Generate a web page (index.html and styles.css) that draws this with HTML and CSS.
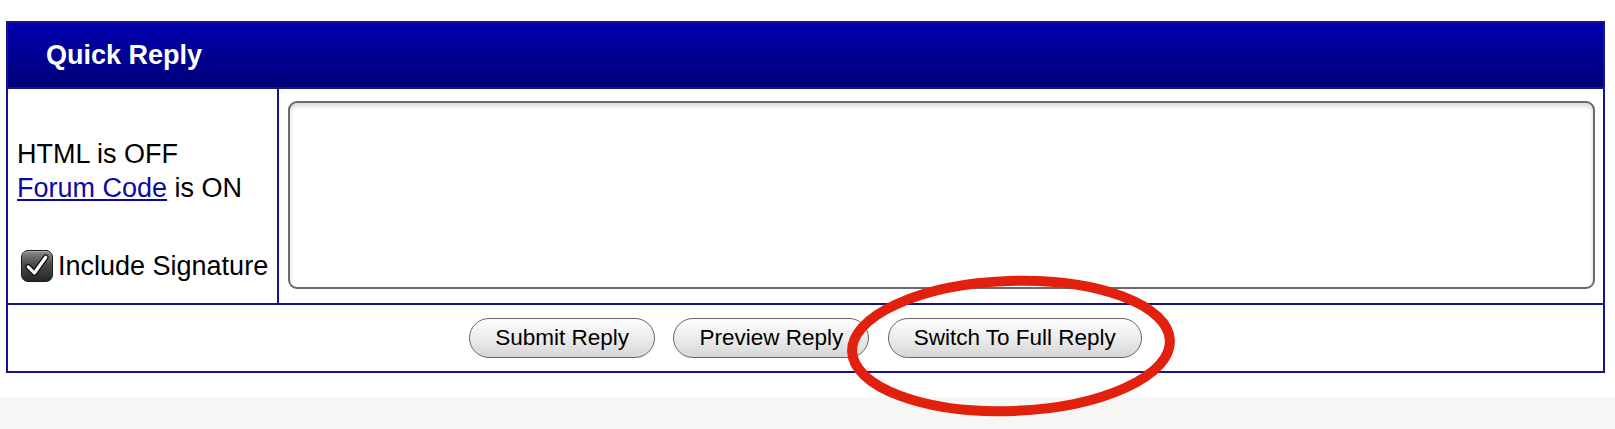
FILE: index.html
```html
<!DOCTYPE html>
<html lang="en">
<head>
    <meta charset="UTF-8">
    <meta name="viewport" content="width=device-width, initial-scale=1.0">
    <title>Quick Reply</title>
    <link rel="stylesheet" href="styles.css">
</head>
<body>
    <div class="page">
        <table class="quick-reply">
            <tr>
                <th colspan="2">Quick Reply</th>
            </tr>
            <tr>
                <td class="options">
                    HTML is OFF<br>
                    <a href="#">Forum Code</a> is ON<br>
                    <br>
                    <label class="sig">
                        <span class="check">
                            <svg viewBox="0 0 32 32" width="28" height="28">
                                <path d="M6 17 L13 24 L26 6" fill="none" stroke="#111" stroke-width="6.5" stroke-linecap="round" stroke-linejoin="round"/>
                                <path d="M6 17 L13 24 L26 6" fill="none" stroke="#fff" stroke-width="3.6" stroke-linecap="round" stroke-linejoin="round"/>
                            </svg>
                        </span>Include Signature
                    </label>
                </td>
                <td class="message">
                    <textarea></textarea>
                </td>
            </tr>
            <tr>
                <td colspan="2" class="actions">
                    <button>Submit Reply</button>
                    <button>Preview Reply</button>
                    <button>Switch To Full Reply</button>
                </td>
            </tr>
        </table>
        <!-- hand drawn circle around the last button -->
        <svg class="mark" width="340" height="150" viewBox="0 0 340 150">
            <ellipse cx="170" cy="71" rx="159" ry="65" fill="none" stroke="#e1200e" stroke-width="10" transform="rotate(-2 170 71)"/>
        </svg>
    </div>
    <div class="band"></div>
</body>
</html>
```

FILE: styles.css
```css
body {
    margin: 0;
    font-family: "Liberation Sans", Arial, sans-serif;
    background: #fff;
}
.page {
    position: relative;
    padding: 21px 10px 24px 6px;
}
.quick-reply {
    width: 1599px;
    border-collapse: collapse;
    border: 2px solid #14148c;
}
.quick-reply th {
    height: 64px;
    padding: 0 0 0 38px;
    text-align: left;
    font-size: 27px;
    font-weight: bold;
    color: #fff;
    background: linear-gradient(#0000b0, #000078);
    border: 2px solid #14148c;
}
.quick-reply td {
    border: 2px solid #14148c;
}
.options {
    width: 252px;
    padding: 48px 8px 0 9px;
    font-size: 27px;
    line-height: 34px;
    vertical-align: top;
    color: #000;
    white-space: nowrap;
}
.options a {
    color: #0a0aa8;
}
.sig {
    display: flex;
    align-items: center;
    margin-top: 10px;
}
.check {
    display: inline-flex;
    align-items: center;
    justify-content: center;
    width: 30px;
    height: 30px;
    margin: 0 5px 0 4px;
    border: 1px solid #1c1c1c;
    border-radius: 7px;
    background: linear-gradient(#8a8a8a, #4a4a4a 45%, #262626);
    box-shadow: inset 0 1px 1px rgba(255, 255, 255, 0.35);
}
.message {
    padding: 12px 8px 14px 9px;
}
.message textarea {
    display: block;
    box-sizing: border-box;
    width: 100%;
    height: 188px;
    border: 2px solid #6a6a6a;
    border-radius: 9px;
    box-shadow: inset 0 3px 4px rgba(0, 0, 0, 0.16);
    resize: none;
}
.actions {
    height: 64px;
    text-align: center;
    vertical-align: middle;
}
.actions button {
    height: 40px;
    margin: 0 7px;
    padding: 0 25px;
    font-family: "Liberation Sans", Arial, sans-serif;
    font-size: 22.5px;
    color: #000;
    border: 1.5px solid #666;
    border-radius: 20px;
    background: linear-gradient(#fdfdfd, #ececec 50%, #d6d6d6);
}
.mark {
    position: absolute;
    left: 841px;
    top: 275px;
}
.band {
    height: 34px;
    background: #f6f6f4;
}
```
